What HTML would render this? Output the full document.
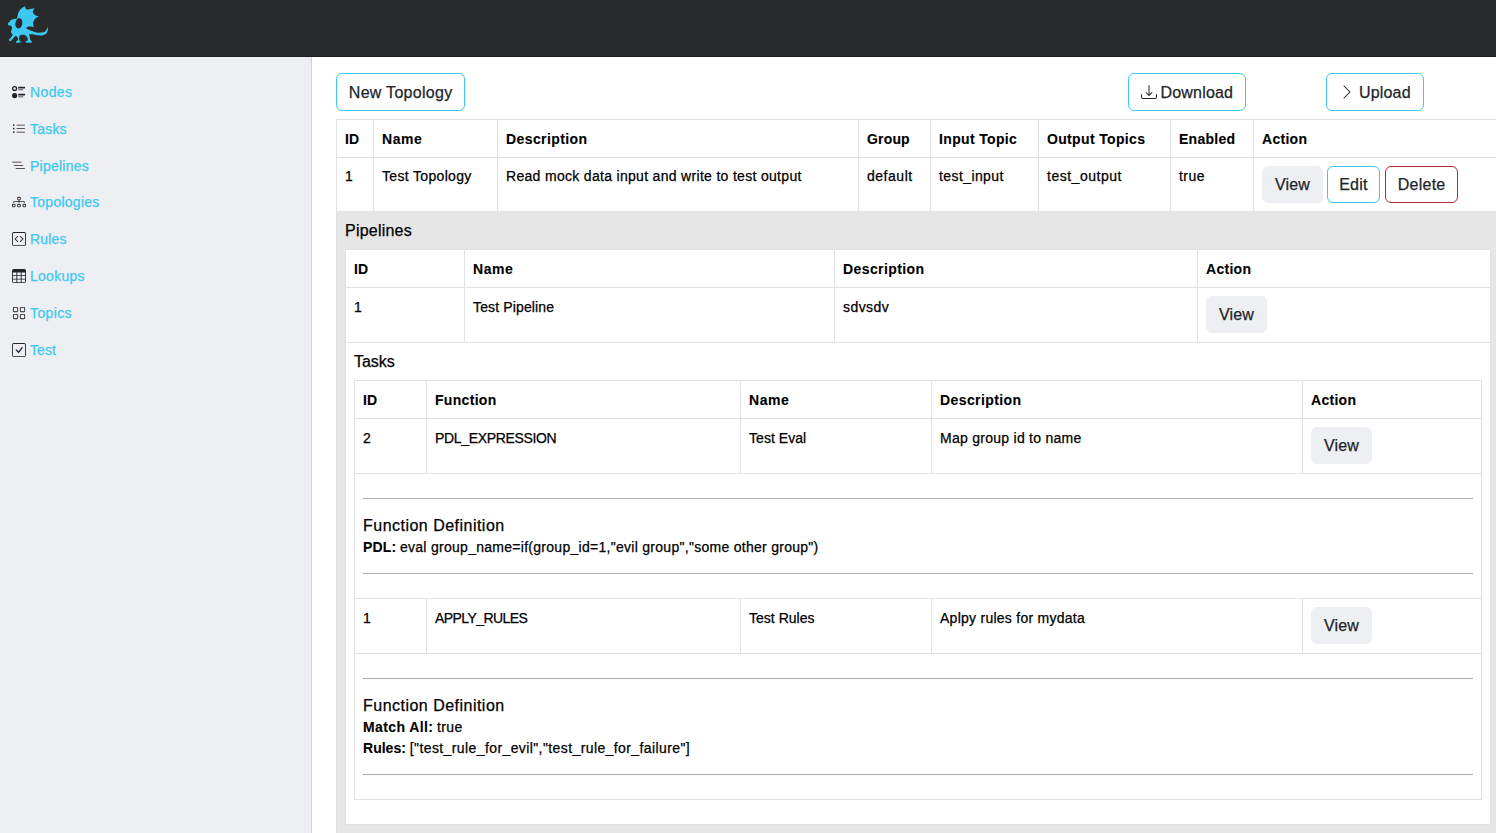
<!DOCTYPE html>
<html><head><meta charset="utf-8">
<style>
*{box-sizing:border-box;margin:0;padding:0}
html,body{width:1496px;height:833px;overflow:hidden;background:#fff}
body{font-family:"Liberation Sans",sans-serif;font-size:14px;line-height:21px;color:#212529;position:relative;-webkit-text-stroke:0.25px currentColor}
#hdr{position:absolute;left:0;top:0;width:1496px;height:57px;background:#292a2c;border-bottom:1px solid #1c1d1f}
#logo{position:absolute;left:0;top:0;width:56px;height:56px}
#side{position:absolute;left:0;top:57px;width:312px;height:776px;background:#eeeff3;border-right:1px solid #d3d4d8}
.nav{position:absolute;left:30px;color:#3cc8f0;font-size:14px;line-height:21px;white-space:nowrap}
.nav svg{position:absolute;left:-18px;top:3px;width:14px;height:14px;fill:#212529}
#main{position:absolute;left:312px;top:57px;width:1184px;height:776px;overflow:hidden}
.btn{display:inline-block;font-family:"Liberation Sans",sans-serif;font-size:16px;line-height:23px;padding:6px 12px;border:1px solid #3cc8f0;border-radius:6px;background:#fff;color:#212529;white-space:nowrap;vertical-align:top}
.btn.v{background:#eeeff3;border-color:#eeeff3}
.btn.d{border-color:#b02a37}
table{border-collapse:collapse;table-layout:fixed}
td,th{border:1px solid #dee2e6;padding:8px;vertical-align:top;text-align:left;white-space:nowrap;color:#000}
th{font-weight:bold;color:#000;padding-top:9px;padding-bottom:7px}
.btn.m{margin-bottom:1px}
.btn.top{padding-top:7px;padding-bottom:5.5px}
tr.r td{padding-top:9px;padding-bottom:7px}
tr.r td.a{padding-top:8px;padding-bottom:8px}
.ln{position:relative;top:1px}
th,b{-webkit-text-stroke-width:0.1px}
td.x{padding:8px;white-space:normal}
.h{font-size:16px;line-height:21px;color:#000}
hr{border:0;border-top:1px solid #aaa;margin:16px 0;height:0}

</style></head><body>
<div id="hdr">
<svg id="logo" viewBox="0 0 56 56"><path fill="#3cc8f0" d="M8.00 23.90 C7.98 23.47 8.13 22.93 8.40 22.60 C8.67 22.27 9.17 22.33 9.60 21.90 C10.03 21.47 10.37 20.45 11.00 20.00 C11.63 19.55 12.52 19.42 13.40 19.20 C14.28 18.98 15.67 19.00 16.30 18.70 C16.93 18.40 16.80 18.50 17.20 17.40 C17.60 16.30 17.93 13.65 18.70 12.10 C19.47 10.55 20.68 9.13 21.80 8.10 C22.92 7.07 25.40 5.90 25.40 5.90 C25.40 5.90 25.02 7.48 25.30 8.10 C25.58 8.72 26.28 9.45 27.10 9.60 C27.92 9.75 28.92 9.23 30.20 9.00 C31.48 8.77 34.80 8.20 34.80 8.20 C34.80 8.20 33.18 9.98 33.00 10.90 C32.82 11.82 33.23 12.93 33.70 13.70 C34.17 14.47 34.90 15.03 35.80 15.50 C36.70 15.97 39.10 16.50 39.10 16.50 C39.10 16.50 36.65 17.33 35.80 18.00 C34.95 18.67 34.47 19.60 34.00 20.50 C33.53 21.40 33.00 22.25 33.00 23.40 C33.00 24.55 34.00 27.40 34.00 27.40 C34.00 27.40 32.50 26.60 31.50 26.50 C30.50 26.40 28.92 26.50 28.00 26.80 C27.08 27.10 26.00 28.30 26.00 28.30 C26.00 28.30 28.67 29.82 30.40 30.50 C32.13 31.18 34.60 32.05 36.40 32.40 C38.20 32.75 39.75 32.77 41.20 32.60 C42.65 32.43 44.13 32.03 45.10 31.40 C46.07 30.77 46.58 29.52 47.00 28.80 C47.42 28.08 47.60 27.10 47.60 27.10 C47.60 27.10 48.12 28.72 47.90 29.80 C47.68 30.88 47.13 32.68 46.30 33.60 C45.47 34.52 44.35 35.02 42.90 35.30 C41.45 35.58 39.32 35.47 37.60 35.30 C35.88 35.13 34.05 34.47 32.60 34.30 C31.15 34.13 28.90 34.30 28.90 34.30 C28.90 34.30 29.48 35.62 29.70 36.50 C29.92 37.38 29.83 38.77 30.20 39.60 C30.57 40.43 31.90 41.50 31.90 41.50 C31.90 41.50 32.07 42.53 31.10 42.70 C30.13 42.87 27.03 42.73 26.10 42.50 C25.17 42.27 25.50 41.30 25.50 41.30 C25.50 41.30 27.30 40.95 27.60 40.30 C27.90 39.65 27.75 38.28 27.30 37.40 C26.85 36.52 25.82 35.43 24.90 35.00 C23.98 34.57 22.72 34.60 21.80 34.80 C20.88 35.00 19.80 35.25 19.40 36.20 C19.00 37.15 19.00 39.55 19.40 40.50 C19.80 41.45 21.80 41.90 21.80 41.90 C21.80 41.90 17.75 42.97 16.80 42.90 C15.85 42.83 16.10 41.50 16.10 41.50 C16.10 41.50 17.93 40.28 18.10 39.50 C18.27 38.72 17.49 37.42 17.10 36.80 C16.71 36.18 15.75 35.80 15.75 35.80 C15.75 35.80 15.08 36.37 14.40 37.10 C13.72 37.83 11.70 40.20 11.70 40.20 C11.70 40.20 9.85 41.32 9.40 41.20 C8.95 41.08 9.00 39.50 9.00 39.50 C9.00 39.50 10.30 38.25 10.90 37.50 C11.50 36.75 12.42 35.58 12.60 35.00 C12.78 34.42 12.27 34.53 12.00 34.00 C11.73 33.47 11.02 32.67 11.00 31.80 C10.98 30.93 11.83 29.75 11.90 28.80 C11.97 27.85 11.97 26.70 11.40 26.10 C10.83 25.50 9.07 25.57 8.50 25.20 C7.93 24.83 8.02 24.33 8.00 23.90Z"/><ellipse cx="18.85" cy="23.35" rx="3.45" ry="5.3" transform="rotate(10 18.85 23.35)" fill="#292a2c"/></svg>
</div>
<div id="side">
<div class="nav" style="top:25px"><svg viewBox="0 0 16 16"><path d="M7 2.5a.5.5 0 0 1 .5-.5h7a.5.5 0 0 1 .5.5v1a.5.5 0 0 1-.5.5h-7a.5.5 0 0 1-.5-.5zM0 12a3 3 0 1 1 6 0 3 3 0 0 1-6 0m7-1.5a.5.5 0 0 1 .5-.5h7a.5.5 0 0 1 .5.5v1a.5.5 0 0 1-.5.5h-7a.5.5 0 0 1-.5-.5zm0-5a.5.5 0 0 1 .5-.5h5a.5.5 0 0 1 0 1h-5a.5.5 0 0 1-.5-.5m0 8a.5.5 0 0 1 .5-.5h5a.5.5 0 0 1 0 1h-5a.5.5 0 0 1-.5-.5M3 1a3 3 0 1 0 0 6 3 3 0 0 0 0-6m0 4.5a1.5 1.5 0 1 1 0-3 1.5 1.5 0 0 1 0 3"/></svg><span style="letter-spacing:0.38px;margin-right:-0.38px">Nodes</span></div>
<div class="nav" style="top:62px"><svg viewBox="0 0 16 16"><path d="M5 11.5a.5.5 0 0 1 .5-.5h9a.5.5 0 0 1 0 1h-9a.5.5 0 0 1-.5-.5m0-4a.5.5 0 0 1 .5-.5h9a.5.5 0 0 1 0 1h-9a.5.5 0 0 1-.5-.5m0-4a.5.5 0 0 1 .5-.5h9a.5.5 0 0 1 0 1h-9a.5.5 0 0 1-.5-.5M2 4.5a1 1 0 1 0 0-2 1 1 0 0 0 0 2m0 4a1 1 0 1 0 0-2 1 1 0 0 0 0 2m0 4a1 1 0 1 0 0-2 1 1 0 0 0 0 2"/></svg><span style="letter-spacing:0.20px;margin-right:-0.20px">Tasks</span></div>
<div class="nav" style="top:99px"><svg viewBox="0 0 16 16"><path d="M0 3.5a.5.5 0 0 1 .5-.5h10a.5.5 0 0 1 0 1H.5a.5.5 0 0 1-.5-.5m2 4a.5.5 0 0 1 .5-.5h10a.5.5 0 0 1 0 1h-10a.5.5 0 0 1-.5-.5m2 3.5a.5.5 0 0 1 .5-.5h10a.5.5 0 0 1 0 1h-10a.5.5 0 0 1-.5-.5"/></svg><span style="letter-spacing:0.24px;margin-right:-0.24px">Pipelines</span></div>
<div class="nav" style="top:135px"><svg viewBox="0 0 16 16"><path fill-rule="evenodd" d="M6 3.5A1.5 1.5 0 0 1 7.5 2h1A1.5 1.5 0 0 1 10 3.5v1A1.5 1.5 0 0 1 8.5 6v1H14a.5.5 0 0 1 .5.5v1a.5.5 0 0 1-1 0V8h-5v.5a.5.5 0 0 1-1 0V8h-5v.5a.5.5 0 0 1-1 0v-1A.5.5 0 0 1 2 7h5.5V6A1.5 1.5 0 0 1 6 4.5zM8.5 5a.5.5 0 0 0 .5-.5v-1a.5.5 0 0 0-.5-.5h-1a.5.5 0 0 0-.5.5v1a.5.5 0 0 0 .5.5zM0 11.5A1.5 1.5 0 0 1 1.5 10h1A1.5 1.5 0 0 1 4 11.5v1A1.5 1.5 0 0 1 2.5 14h-1A1.5 1.5 0 0 1 0 12.5zm1.5-.5a.5.5 0 0 0-.5.5v1a.5.5 0 0 0 .5.5h1a.5.5 0 0 0 .5-.5v-1a.5.5 0 0 0-.5-.5zm4.5.5A1.5 1.5 0 0 1 7.5 10h1a1.5 1.5 0 0 1 1.5 1.5v1A1.5 1.5 0 0 1 8.5 14h-1A1.5 1.5 0 0 1 6 12.5zm1.5-.5a.5.5 0 0 0-.5.5v1a.5.5 0 0 0 .5.5h1a.5.5 0 0 0 .5-.5v-1a.5.5 0 0 0-.5-.5zm4.5.5a1.5 1.5 0 0 1 1.5-1.5h1a1.5 1.5 0 0 1 1.5 1.5v1a1.5 1.5 0 0 1-1.5 1.5h-1a1.5 1.5 0 0 1-1.5-1.5zm1.5-.5a.5.5 0 0 0-.5.5v1a.5.5 0 0 0 .5.5h1a.5.5 0 0 0 .5-.5v-1a.5.5 0 0 0-.5-.5z"/></svg><span style="letter-spacing:0.27px;margin-right:-0.27px">Topologies</span></div>
<div class="nav" style="top:172px"><svg viewBox="0 0 16 16"><path d="M14 1a1 1 0 0 1 1 1v12a1 1 0 0 1-1 1H2a1 1 0 0 1-1-1V2a1 1 0 0 1 1-1zM2 0a2 2 0 0 0-2 2v12a2 2 0 0 0 2 2h12a2 2 0 0 0 2-2V2a2 2 0 0 0-2-2z"/><path d="M6.854 4.646a.5.5 0 0 1 0 .708L4.207 8l2.647 2.646a.5.5 0 0 1-.708.708l-3-3a.5.5 0 0 1 0-.708l3-3a.5.5 0 0 1 .708 0m2.292 0a.5.5 0 0 0 0 .708L11.793 8l-2.647 2.646a.5.5 0 0 0 .708.708l3-3a.5.5 0 0 0 0-.708l-3-3a.5.5 0 0 0-.708 0"/></svg><span style="letter-spacing:0.17px;margin-right:-0.17px">Rules</span></div>
<div class="nav" style="top:209px"><svg viewBox="0 0 16 16"><path d="M0 2a2 2 0 0 1 2-2h12a2 2 0 0 1 2 2v12a2 2 0 0 1-2 2H2a2 2 0 0 1-2-2zm15 2h-4v3h4zm0 4h-4v3h4zm0 4h-4v3h3a1 1 0 0 0 1-1zm-5 3v-3H6v3zm-5 0v-3H1v2a1 1 0 0 0 1 1zm-4-4h4V8H1zm0-4h4V4H1zm5-3v3h4V4zm4 4H6v3h4z"/></svg><span style="letter-spacing:0.27px;margin-right:-0.27px">Lookups</span></div>
<div class="nav" style="top:246px"><svg viewBox="0 0 16 16"><path d="M1 2.5A1.5 1.5 0 0 1 2.5 1h3A1.5 1.5 0 0 1 7 2.5v3A1.5 1.5 0 0 1 5.5 7h-3A1.5 1.5 0 0 1 1 5.5zM2.5 2a.5.5 0 0 0-.5.5v3a.5.5 0 0 0 .5.5h3a.5.5 0 0 0 .5-.5v-3a.5.5 0 0 0-.5-.5zm6.5.5A1.5 1.5 0 0 1 10.5 1h3A1.5 1.5 0 0 1 15 2.5v3A1.5 1.5 0 0 1 13.5 7h-3A1.5 1.5 0 0 1 9 5.5zm1.5-.5a.5.5 0 0 0-.5.5v3a.5.5 0 0 0 .5.5h3a.5.5 0 0 0 .5-.5v-3a.5.5 0 0 0-.5-.5zM1 10.5A1.5 1.5 0 0 1 2.5 9h3A1.5 1.5 0 0 1 7 10.5v3A1.5 1.5 0 0 1 5.5 15h-3A1.5 1.5 0 0 1 1 13.5zm1.5-.5a.5.5 0 0 0-.5.5v3a.5.5 0 0 0 .5.5h3a.5.5 0 0 0 .5-.5v-3a.5.5 0 0 0-.5-.5zm6.5.5A1.5 1.5 0 0 1 10.5 9h3a1.5 1.5 0 0 1 1.5 1.5v3a1.5 1.5 0 0 1-1.5 1.5h-3A1.5 1.5 0 0 1 9 13.5zm1.5-.5a.5.5 0 0 0-.5.5v3a.5.5 0 0 0 .5.5h3a.5.5 0 0 0 .5-.5v-3a.5.5 0 0 0-.5-.5z"/></svg><span style="letter-spacing:0.38px;margin-right:-0.38px">Topics</span></div>
<div class="nav" style="top:283px"><svg viewBox="0 0 16 16"><path d="M14 1a1 1 0 0 1 1 1v12a1 1 0 0 1-1 1H2a1 1 0 0 1-1-1V2a1 1 0 0 1 1-1zM2 0a2 2 0 0 0-2 2v12a2 2 0 0 0 2 2h12a2 2 0 0 0 2-2V2a2 2 0 0 0-2-2z"/><path d="M10.97 4.97a.75.75 0 0 1 1.071 1.05l-3.992 4.99a.75.75 0 0 1-1.08.02L4.324 8.384a.75.75 0 1 1 1.06-1.06l2.094 2.093 3.473-4.425z"/></svg><span style="letter-spacing:0.10px;margin-right:-0.10px">Test</span></div>
</div>
<div id="main">
<button class="btn top" style="position:absolute;left:24px;top:16px;width:129px;padding-left:0;padding-right:0"><span style="letter-spacing:0.29px;margin-right:-0.29px">New Topology</span></button>
<button class="btn top" style="position:absolute;left:816px;top:16px;width:117.5px;padding-left:0;padding-right:0"><svg width="16" height="16" viewBox="0 0 16 16" style="vertical-align:-2px;margin-left:1px;margin-right:3px;fill:#212529"><path d="M.5 9.9a.5.5 0 0 1 .5.5v2.5a1 1 0 0 0 1 1h12a1 1 0 0 0 1-1v-2.5a.5.5 0 0 1 1 0v2.5a2 2 0 0 1-2 2H2a2 2 0 0 1-2-2v-2.5a.5.5 0 0 1 .5-.5"/><path d="M7.646 11.854a.5.5 0 0 0 .708 0l3-3a.5.5 0 0 0-.708-.708L8.5 10.293V1.5a.5.5 0 0 0-1 0v8.793L5.354 8.146a.5.5 0 1 0-.708.708z"/></svg><span style="letter-spacing:0.20px;margin-right:-0.20px">Download</span></button>
<button class="btn top" style="position:absolute;left:1014px;top:16px;width:97.5px;padding-left:0;padding-right:0"><svg width="16" height="16" viewBox="0 0 16 16" style="vertical-align:-2px;margin-right:4px;fill:#212529"><path fill-rule="evenodd" d="M4.646 1.646a.5.5 0 0 1 .708 0l6 6a.5.5 0 0 1 0 .708l-6 6a.5.5 0 0 1-.708-.708L10.293 8 4.646 2.354a.5.5 0 0 1 0-.708"/></svg><span style="letter-spacing:0.20px;margin-right:-0.20px">Upload</span></button>
<table id="t1" style="position:absolute;left:24px;top:62px;width:1164px">
<colgroup><col style="width:37px"><col style="width:124px"><col style="width:361px"><col style="width:72px"><col style="width:108px"><col style="width:132px"><col style="width:83px"><col></colgroup>
<tr><th>ID</th><th><span style="letter-spacing:0.55px;margin-right:-0.55px">Name</span></th><th><span style="letter-spacing:0.40px;margin-right:-0.40px">Description</span></th><th><span style="letter-spacing:0.17px;margin-right:-0.17px">Group</span></th><th><span style="letter-spacing:0.35px;margin-right:-0.35px">Input Topic</span></th><th><span style="letter-spacing:0.34px;margin-right:-0.34px">Output Topics</span></th><th><span style="letter-spacing:0.28px;margin-right:-0.28px">Enabled</span></th><th><span style="letter-spacing:0.28px;margin-right:-0.28px">Action</span></th></tr>
<tr><td>1</td><td><span style="letter-spacing:0.33px;margin-right:-0.33px">Test Topology</span></td><td><span style="letter-spacing:0.31px;margin-right:-0.31px">Read mock data input and write to test output</span></td><td><span style="letter-spacing:0.52px;margin-right:-0.52px">default</span></td><td><span style="letter-spacing:0.41px;margin-right:-0.41px">test_input</span></td><td><span style="letter-spacing:0.51px;margin-right:-0.51px">test_output</span></td><td><span style="letter-spacing:0.43px;margin-right:-0.43px">true</span></td><td><button class="btn v"><span style="letter-spacing:0.10px;margin-right:-0.10px">View</span></button> <button class="btn" style="width:53.5px;padding-left:0;padding-right:0"><span style="letter-spacing:0.17px;margin-right:-0.17px">Edit</span></button> <button class="btn d" style="margin-left:1px;width:73px;padding-left:0;padding-right:0"><span style="letter-spacing:0.26px;margin-right:-0.26px">Delete</span></button></td></tr>
<tr><td colspan="8" class="x" style="background:#e6e6e6">
<div class="h" style="margin-bottom:8px"><span style="letter-spacing:0.22px;margin-right:-0.22px">Pipelines</span></div>
<table id="t2" style="width:1146px;background:#fff;margin-bottom:16px">
<colgroup><col style="width:119px"><col style="width:370px"><col style="width:363px"><col></colgroup>
<tr><th>ID</th><th><span style="letter-spacing:0.55px;margin-right:-0.55px">Name</span></th><th><span style="letter-spacing:0.40px;margin-right:-0.40px">Description</span></th><th><span style="letter-spacing:0.28px;margin-right:-0.28px">Action</span></th></tr>
<tr class="r"><td>1</td><td><span style="letter-spacing:0.14px;margin-right:-0.14px">Test Pipeline</span></td><td><span style="letter-spacing:0.42px;margin-right:-0.42px">sdvsdv</span></td><td class="a"><button class="btn v m"><span style="letter-spacing:0.10px;margin-right:-0.10px">View</span></button></td></tr>
<tr><td colspan="4" class="x">
<div class="h" style="margin-bottom:8px"><span style="letter-spacing:-0.02px;margin-right:0.02px">Tasks</span></div>
<table id="t3" style="width:1128px;margin-bottom:16px">
<colgroup><col style="width:72px"><col style="width:314px"><col style="width:191px"><col style="width:371px"><col></colgroup>
<tr><th>ID</th><th><span style="letter-spacing:0.31px;margin-right:-0.31px">Function</span></th><th><span style="letter-spacing:0.55px;margin-right:-0.55px">Name</span></th><th><span style="letter-spacing:0.40px;margin-right:-0.40px">Description</span></th><th><span style="letter-spacing:0.28px;margin-right:-0.28px">Action</span></th></tr>
<tr class="r"><td>2</td><td><span style="letter-spacing:-0.34px;margin-right:0.34px">PDL_EXPRESSION</span></td><td><span style="letter-spacing:0.05px;margin-right:-0.05px">Test Eval</span></td><td><span style="letter-spacing:0.27px;margin-right:-0.27px">Map group id to name</span></td><td class="a"><button class="btn v m"><span style="letter-spacing:0.10px;margin-right:-0.10px">View</span></button></td></tr>
<tr><td colspan="5" class="x"><hr><div class="h"><span style="letter-spacing:0.48px;margin-right:-0.48px">Function Definition</span></div><div class="ln"><b><span style="letter-spacing:0.13px;margin-right:-0.13px">PDL:</span></b> <span style="letter-spacing:0.28px;margin-right:-0.28px">eval group_name=if(group_id=1,"evil group","some other group")</span></div><hr></td></tr>
<tr class="r"><td>1</td><td><span style="letter-spacing:-0.58px;margin-right:0.58px">APPLY_RULES</span></td><td><span style="letter-spacing:0.02px;margin-right:-0.02px">Test Rules</span></td><td><span style="letter-spacing:0.26px;margin-right:-0.26px">Aplpy rules for mydata</span></td><td class="a"><button class="btn v m"><span style="letter-spacing:0.10px;margin-right:-0.10px">View</span></button></td></tr>
<tr><td colspan="5" class="x"><hr><div class="h"><span style="letter-spacing:0.48px;margin-right:-0.48px">Function Definition</span></div><div class="ln"><b><span style="letter-spacing:0.40px;margin-right:-0.40px">Match All:</span></b> <span style="letter-spacing:0.43px;margin-right:-0.43px">true</span></div><div class="ln"><b><span style="letter-spacing:0.02px;margin-right:-0.02px">Rules:</span></b> <span style="letter-spacing:0.40px;margin-right:-0.40px">["test_rule_for_evil","test_rule_for_failure"]</span></div><hr></td></tr>
</table>
</td></tr>
</table>
</td></tr>
</table>
</div>
</body></html>
